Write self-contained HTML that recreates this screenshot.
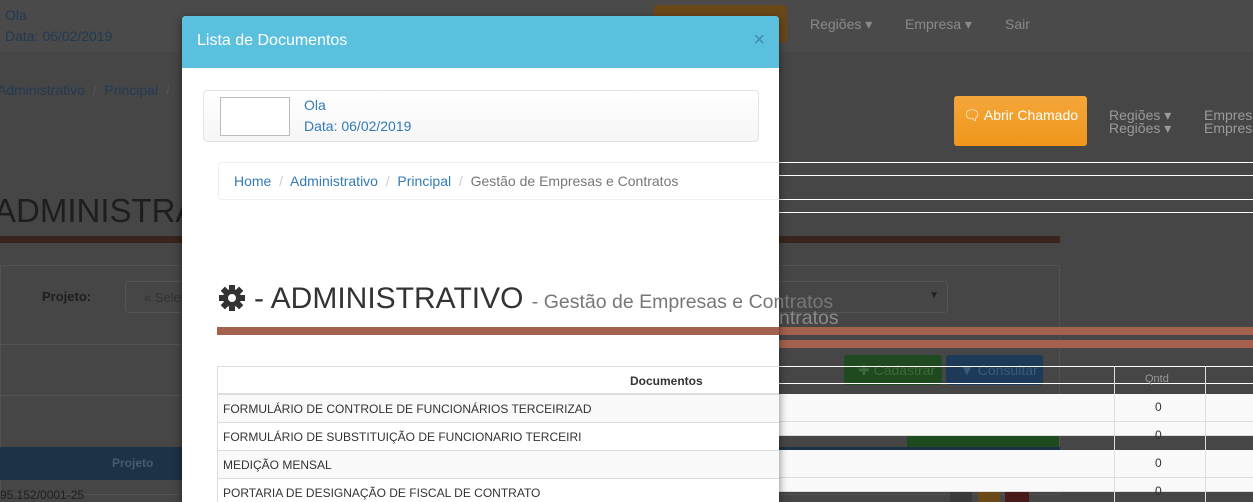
<!DOCTYPE html>
<html style="overflow:hidden;height:502px"><head><meta charset="utf-8"><style>
*{margin:0;padding:0;box-sizing:border-box}
body{width:1253px;height:502px;overflow:hidden;background:#464646;font-family:"Liberation Sans",Arial,sans-serif;position:relative;font-size:14px}
.a{position:absolute;white-space:nowrap}
.hl{position:absolute;left:779px;width:474px;height:1px;background:#fff}
</style></head><body>
<div class="a" style="left:0;top:0;width:1253px;height:52px;background:#4a4a4a"></div>
<div class="a" style="left:5px;top:5px;color:#233a52;font-size:14px;line-height:21px">Ola<br>Data: 06/02/2019</div>
<div class="a" style="left:654px;top:5px;width:133px;height:38px;background:#6a4818;border-radius:4px"></div>
<div class="a" style="left:810px;top:16px;color:#8a8a8a">Regiões ▾</div>
<div class="a" style="left:905px;top:16px;color:#8a8a8a">Empresa ▾</div>
<div class="a" style="left:1005px;top:16px;color:#8a8a8a">Sair</div>
<div class="a" style="left:-3px;top:82px;color:#233a52">Administrativo <span style="color:#555">&nbsp;/&nbsp;</span> Principal <span style="color:#555">&nbsp;/</span></div>
<div class="a" style="left:-6px;top:192px;color:#1e1e1e;font-size:33px">ADMINISTRATIVO</div>
<div class="a" style="left:0;top:236px;width:1060px;height:7px;background:#3a241f"></div>
<div class="a" style="left:0;top:265px;width:1060px;height:230px;border:1px solid #525252;background:#464646"></div>
<div class="a" style="left:42px;top:289px;color:#1e1e1e;font-weight:bold;font-size:13px">Projeto:</div>
<div class="a" style="left:125px;top:281px;width:823px;height:32px;border:1px solid #555;border-radius:4px;color:#333;padding:8px 18px;font-size:13px">« Selecione<span style="position:absolute;right:8px;top:8px;font-size:10px;color:#222">▼</span></div>
<div class="a" style="left:0;top:344px;width:1060px;height:1px;background:#525252"></div>
<div class="a" style="left:0;top:395px;width:1060px;height:1px;background:#525252"></div>
<div class="a" style="left:844px;top:355px;width:98px;height:30px;background:#1f4a1f;border-radius:3px;color:#3c6a3c;padding:7px 14px">✚ Cadastrar</div>
<div class="a" style="left:946px;top:355px;width:97px;height:30px;background:#1d3a58;border-radius:3px;color:#3b5b7b;padding:7px 14px">▼ Consultar</div>
<div class="a" style="left:907px;top:436px;width:152px;height:12px;background:#1f4a1f"></div>
<div class="a" style="left:0;top:447px;width:1060px;height:33px;background:#1c3246"></div>
<div class="a" style="left:112px;top:456px;color:#465a70;font-weight:bold;font-size:12px">Projeto</div>
<div class="a" style="left:0;top:488px;color:#1e1e1e;font-size:12px">95.152/0001-25</div>
<div class="a" style="left:950px;top:492px;width:22px;height:10px;background:#3a3a3a"></div>
<div class="a" style="left:978px;top:492px;width:22px;height:10px;background:#6a4818"></div>
<div class="a" style="left:1005px;top:492px;width:24px;height:10px;background:#4a1a1a"></div>

<div class="a" style="left:954px;top:96px;width:133px;height:50px;background:linear-gradient(#f5a63a,#ef961c);border-radius:3px;color:#fff;padding:11px 0 0 9px;font-size:14px">🗨 Abrir Chamado</div>
<div class="a" style="left:1109px;top:109px;color:#9a9a9a;line-height:13px">Regiões ▾<br>Regiões ▾</div>
<div class="a" style="left:1204px;top:109px;color:#9a9a9a;line-height:13px">Empresa<br>Empresa</div>
<div class="hl" style="top:162px"></div><div class="hl" style="top:175px"></div>
<div class="hl" style="top:199px"></div><div class="hl" style="top:212px"></div>
<div class="a" style="left:779px;top:327px;width:474px;height:8px;background:#a5614f"></div>
<div class="a" style="left:779px;top:340px;width:474px;height:8px;background:#a5614f"></div>
<div class="a" style="left:779px;top:307px;color:#8a8a8a;font-size:19.5px">ntratos</div>
<div class="hl" style="top:366px"></div><div class="hl" style="top:383px"></div>
<div class="a" style="left:1145px;top:373px;color:#999;font-size:11px">Qntd</div>
<div class="a" style="left:779px;top:394px;width:474px;height:42px;background:#f9f9f9;border-bottom:1px solid #ddd"></div>
<div class="a" style="left:779px;top:421px;width:474px;height:1px;background:#ddd"></div>
<div class="a" style="left:779px;top:450px;width:474px;height:42px;background:#f9f9f9;border-bottom:1px solid #ddd"></div>
<div class="a" style="left:779px;top:477px;width:474px;height:1px;background:#ddd"></div>
<div class="a" style="left:1114px;top:366px;width:1px;height:136px;background:#ddd"></div>
<div class="a" style="left:1205px;top:366px;width:1px;height:136px;background:#ddd"></div>
<div class="a" style="left:1155px;top:400px;color:#333;font-size:12px">0</div>
<div class="a" style="left:1155px;top:428px;color:#333;font-size:12px">0</div>
<div class="a" style="left:1155px;top:456px;color:#333;font-size:12px">0</div>
<div class="a" style="left:1155px;top:484px;color:#333;font-size:12px">0</div>

<div class="a" style="left:182px;top:16px;width:597px;height:486px;background:#fff;box-shadow:0 3px 9px rgba(0,0,0,.5);border-radius:4px 4px 0 0">
  <div style="height:52px;background:#5bc0de;color:#fff;font-size:16px;padding:16px 15px;border-radius:4px 4px 0 0">Lista de Documentos<span style="position:absolute;right:14px;top:13px;color:#3b8fa8;font-size:20px">×</span></div>
  <div class="a" style="left:21px;top:74px;width:556px;height:52px;border:1px solid #e3e3e3;border-radius:4px;background:linear-gradient(#fff,#f5f5f5)"></div>
  <div class="a" style="left:38px;top:81px;width:70px;height:39px;border:1px solid #bbb;background:#fff"></div>
  <div class="a" style="left:122px;top:79px;color:#337ab7;line-height:21px">Ola<br>Data: 06/02/2019</div>
  <div class="a" style="left:36px;top:146px;width:561px;height:38px;border:1px solid #eee;border-right:none;border-radius:4px 0 0 4px;padding:10px 15px;color:#777">
    <span style="color:#337ab7">Home</span> <span style="color:#ccc">&nbsp;/&nbsp;</span> <span style="color:#337ab7">Administrativo</span> <span style="color:#ccc">&nbsp;/&nbsp;</span> <span style="color:#337ab7">Principal</span> <span style="color:#ccc">&nbsp;/&nbsp;</span> Gestão de Empresas e Contratos</div>
  <svg class="a" style="left:36px;top:268px" width="28" height="28" viewBox="0 0 28 28"><g fill="#333"><circle cx="14" cy="14" r="9"/><g id="t"><rect x="11" y="1" width="6" height="6"/><rect x="11" y="21" width="6" height="6"/><rect x="1" y="11" width="6" height="6"/><rect x="21" y="11" width="6" height="6"/></g><use href="#t" transform="rotate(45 14 14)"/></g><circle cx="14" cy="14" r="4" fill="#fff"/></svg>
  <div class="a" style="left:72px;top:266px;color:#333;font-size:30px">- ADMINISTRATIVO <span style="font-size:19.5px;color:#777">- Gestão de Empresas e Contratos</span></div>
  <div class="a" style="left:35px;top:311px;width:562px;height:8px;background:#a5614f"></div>
  <div class="a" style="left:35px;top:350px;width:562px;height:136px;border:1px solid #ddd;border-right:none;border-bottom:none;overflow:hidden">
    <div style="height:28px;border-bottom:2px solid #ddd;position:relative"><span style="position:absolute;left:412px;top:7px;font-weight:bold;font-size:12px;color:#333">Documentos</span></div>
    <div style="height:28px;background:#f9f9f9;border-bottom:1px solid #ddd;font-size:12px;padding:7px 5px;color:#333">FORMULÁRIO DE CONTROLE DE FUNCIONÁRIOS TERCEIRIZAD</div>
    <div style="height:28px;border-bottom:1px solid #ddd;font-size:12px;padding:7px 5px;color:#333">FORMULÁRIO DE SUBSTITUIÇÃO DE FUNCIONARIO TERCEIRI</div>
    <div style="height:28px;background:#f9f9f9;border-bottom:1px solid #ddd;font-size:12px;padding:7px 5px;color:#333">MEDIÇÃO MENSAL</div>
    <div style="height:28px;font-size:12px;padding:7px 5px;color:#333">PORTARIA DE DESIGNAÇÃO DE FISCAL DE CONTRATO</div>
  </div>
</div>
</body></html>
